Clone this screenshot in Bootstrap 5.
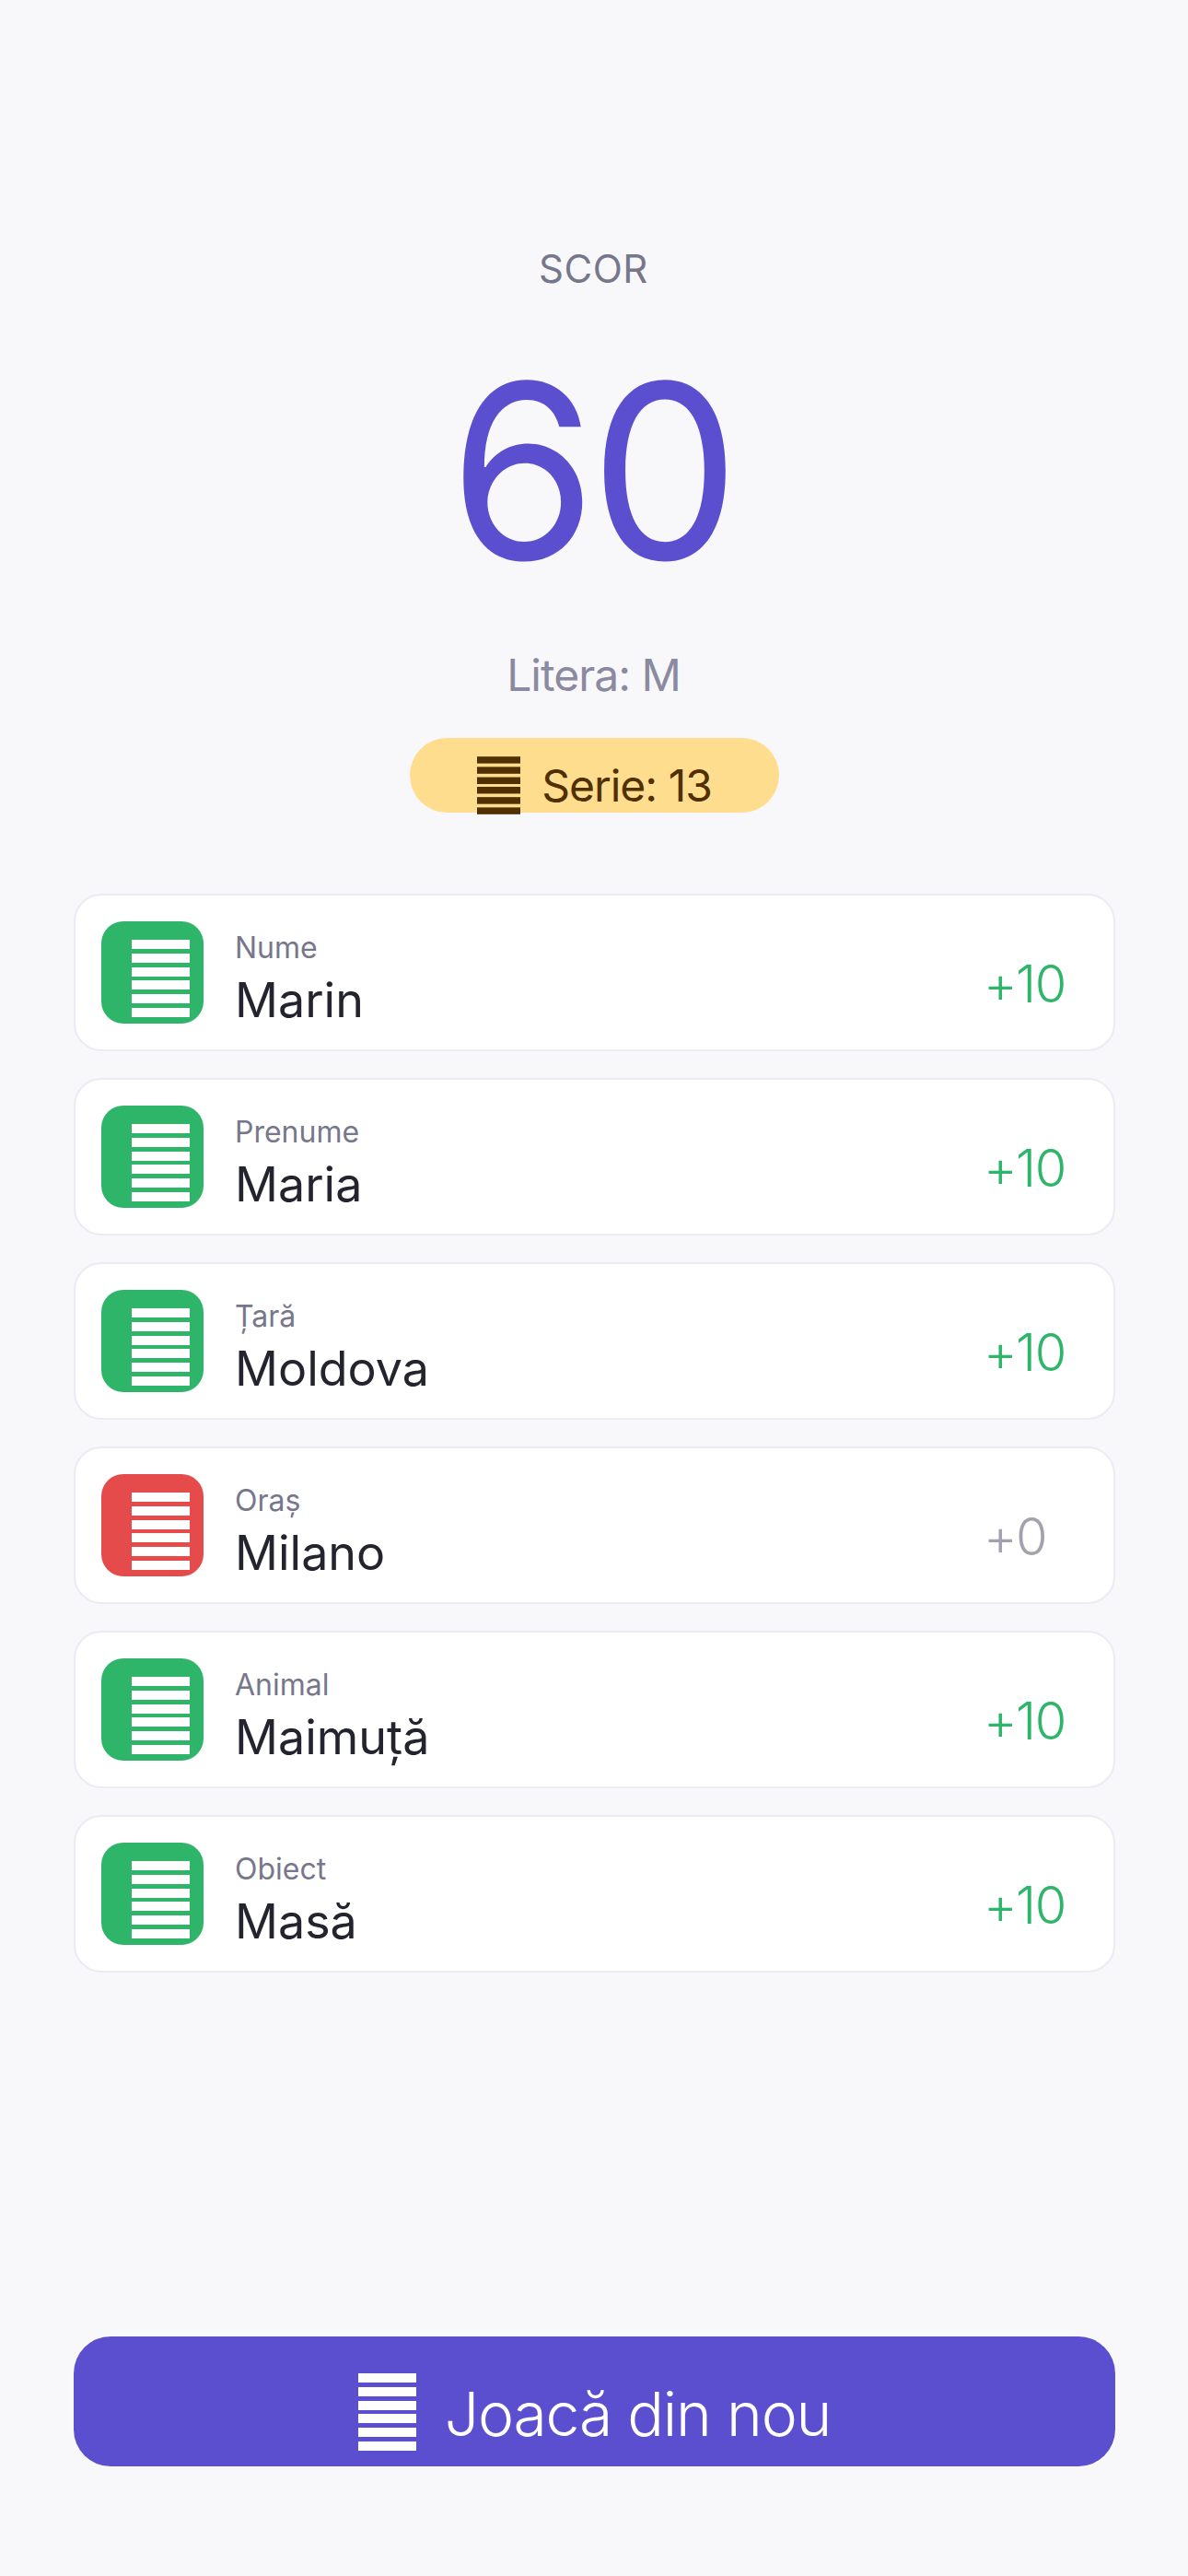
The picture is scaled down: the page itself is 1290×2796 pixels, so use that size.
<!DOCTYPE html>
<html lang="ro">
  <head>
    <meta charset="UTF-8" />
    <meta name="viewport" content="width=device-width, initial-scale=1.0" />
    <title>Scor</title>
    <link href="https://cdn.jsdelivr.net/npm/bootstrap@5.3.0/dist/css/bootstrap.min.css" rel="stylesheet" />
    <style>
      body {
        background-color: #f8f8fb;
        font-family: Inter, "Noto Sans", sans-serif;
        margin: 0;
      }
      .screen {
        min-height: 2796px;
        padding: 0 79px 119px 80px;
      }
      .score-head {
        padding-top: 264px;
      }
      .score-label {
        font-size: 42px;
        line-height: 56px;
        color: #77778c;
        letter-spacing: 0.5px;
        margin-right: 2px;
      }
      .score-value {
        font-size: 264px;
        line-height: 326px;
        font-weight: 400;
        color: #5b4fcf;
        letter-spacing: -7px;
        margin: 28px 7px 0 0;
        transform: scaleX(0.975);
      }
      .score-letter {
        font-size: 48px;
        line-height: 58px;
        color: #8a8aa0;
        letter-spacing: -1px;
        margin: 30px 2px 0 0;
      }
      .streak-pill {
        width: 401px;
        height: 81px;
        margin-top: 39px;
        background: #ffdd8e;
        border-radius: 41px;
        color: #503000;
        font-size: 48px;
        letter-spacing: -1px;
        gap: 23px;
      }
      .streak-pill svg {
        width: 47px;
        height: 63px;
        margin-top: 22px;
        fill: #503000;
        overflow: visible;
      }
      .streak-pill span {
        margin-top: 22px;
      }
      .answers {
        margin-top: 88px;
        gap: 29px;
      }
      .answer-row {
        height: 171px;
        background: #fff;
        border: 2px solid #ebebf5;
        border-radius: 30px;
        padding: 28px 53px 0 28px;
      }
      .answer-icon {
        width: 111px;
        height: 111px;
        border-radius: 24px;
        padding: 20px 15px 0 33px;
      }
      .answer-icon svg {
        display: block;
        width: 63px;
        height: 84px;
        fill: #fff;
      }
      .icon-ok {
        background: #2eb56a;
      }
      .icon-bad {
        background: #e54b4b;
      }
      .answer-text {
        margin-left: 34px;
      }
      .answer-label {
        font-size: 32px;
        line-height: 40px;
        color: #77778c;
        margin-top: 9px;
      }
      .answer-name {
        font-size: 52px;
        line-height: 62px;
        color: #24242f;
        margin-top: 6px;
      }
      .answer-points {
        width: 86px;
        font-size: 56px;
        line-height: 68px;
        font-weight: 300;
        letter-spacing: -1.5px;
        white-space: nowrap;
        margin: 34px 2px 0 -2px;
      }
      .points-ok {
        color: #2eb56a;
      }
      .points-none {
        color: #a2a2ae;
      }
      .replay-btn {
        height: 141px;
        background: #5b4fcf;
        border: 0;
        border-radius: 40px;
        color: #fff;
        font-size: 66px;
        font-weight: 300;
        letter-spacing: -1.2px;
        gap: 31px;
      }
      .replay-btn:hover {
        background: #5b4fcf;
        color: #fff;
      }
      .replay-btn svg {
        width: 63px;
        height: 84px;
        margin-top: 23px;
        fill: #fff;
        overflow: visible;
      }
      .replay-btn span {
        margin-top: 28px;
      }
    </style>
  </head>
  <body>
    <svg width="0" height="0" class="position-absolute">
      <symbol id="bars" viewBox="0 0 63 84">
        <rect y="0" width="63" height="10" />
        <rect y="15" width="63" height="10" />
        <rect y="30" width="63" height="10" />
        <rect y="44" width="63" height="10" />
        <rect y="59" width="63" height="10" />
        <rect y="74" width="63" height="10" />
      </symbol>
    </svg>

    <div class="screen d-flex flex-column">
      <div class="score-head text-center d-flex flex-column align-items-center">
        <div class="score-label">SCOR</div>
        <div class="score-value">60</div>
        <div class="score-letter">Litera: M</div>
        <div class="streak-pill d-flex justify-content-center align-items-center">
          <svg><use href="#bars" /></svg>
          <span>Serie: 13</span>
        </div>
      </div>

      <div class="answers d-flex flex-column" id="answers"></div>

      <button class="replay-btn btn w-100 mt-auto d-flex justify-content-center align-items-center p-0">
        <svg><use href="#bars" /></svg>
        <span>Joacă din nou</span>
      </button>
    </div>

    <script>
      const answers = [
        ["Nume", "Marin", 10],
        ["Prenume", "Maria", 10],
        ["Țară", "Moldova", 10],
        ["Oraș", "Milano", 0],
        ["Animal", "Maimuță", 10],
        ["Obiect", "Masă", 10],
      ];

      document.getElementById("answers").innerHTML = answers
        .map(
          ([label, name, points]) => `
        <div class="answer-row d-flex align-items-start">
          <div class="answer-icon ${points ? "icon-ok" : "icon-bad"}">
            <svg><use href="#bars" /></svg>
          </div>
          <div class="answer-text flex-grow-1">
            <div class="answer-label">${label}</div>
            <div class="answer-name">${name}</div>
          </div>
          <div class="answer-points ${points ? "points-ok" : "points-none"}">+${points}</div>
        </div>`
        )
        .join("");
    </script>
    <script src="https://cdn.jsdelivr.net/npm/bootstrap@5.3.0/dist/js/bootstrap.bundle.min.js"></script>
  </body>
</html>
